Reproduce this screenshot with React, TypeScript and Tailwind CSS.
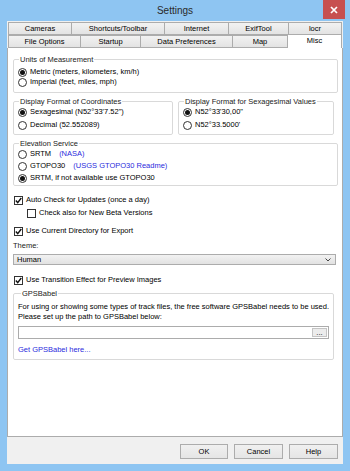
import type { ReactNode } from 'react'

const row1 = [
  { label: 'Cameras', w: 'w-[63px]' },
  { label: 'Shortcuts/Toolbar', w: 'w-[93px]' },
  { label: 'Internet', w: 'w-[64px]' },
  { label: 'ExifTool', w: 'w-[60px]' },
  { label: 'locr', w: 'w-[54px]' },
]

const row2 = [
  { label: 'File Options', w: 'w-[72px]' },
  { label: 'Startup', w: 'w-[60px]' },
  { label: 'Data Preferences', w: 'w-[92px]' },
  { label: 'Map', w: 'w-[55px]' },
]

function Radio({ checked, children }: { checked?: boolean; children: ReactNode }) {
  return (
    <div className="flex items-center h-[10px] pl-[2px]">
      <span className="w-[9px] h-[9px] rounded-full border border-[#333] bg-white flex items-center justify-center shrink-0">
        {checked && <span className="w-[5px] h-[5px] rounded-full bg-[#111]" />}
      </span>
      <span className="ml-[3px] whitespace-nowrap">{children}</span>
    </div>
  )
}

function Check({ checked, children }: { checked?: boolean; children: ReactNode }) {
  return (
    <div className="flex items-center h-[10px]">
      <span className="w-[9px] h-[9px] border border-[#333] bg-white flex items-center justify-center shrink-0">
        {checked && (
          <svg width="7" height="7" viewBox="0 0 7 7">
            <path d="M0.8 3.6 L2.7 5.6 L6.3 1" fill="none" stroke="#111" strokeWidth="1.4" />
          </svg>
        )}
      </span>
      <span className="ml-[3px] whitespace-nowrap">{children}</span>
    </div>
  )
}

function Group({ title, className, children }: { title: string; className?: string; children: ReactNode }) {
  return (
    <fieldset className={`border border-[#d9d9d9] rounded-[2px] px-[2px] ${className ?? ''}`}>
      <legend className="ml-[3px] px-[1px] leading-[9px] text-[#222]">{title}</legend>
      {children}
    </fieldset>
  )
}

function Tab({ label, w }: { label: string; w: string }) {
  return (
    <div
      className={`${w} h-[13px] border border-r-0 border-[#acacac] bg-gradient-to-b from-[#f2f2f2] to-[#e3e3e3] flex items-center justify-center leading-none last:border-r`}
    >
      {label}
    </div>
  )
}

export default function App() {
  return (
    <div
      className="w-[350px] h-[471px] bg-[#8ec5f2] flex flex-col text-[7.5px] text-black overflow-hidden"
      style={{ fontFamily: '"Liberation Sans", Arial, sans-serif' }}
    >
      {/* Title bar */}
      <div className="h-[21px] flex items-start shrink-0">
        <div className="w-[27px]" />
        <div className="flex-1 text-center text-[10px] leading-[21px] text-[#2a2a2a]">Settings</div>
        <div className="w-[22px] h-[19px] bg-[#c75050] flex items-center justify-center">
          <svg width="8" height="8" viewBox="0 0 8 8">
            <path d="M1 1 L7 7 M7 1 L1 7" stroke="white" strokeWidth="1.7" />
          </svg>
        </div>
        <div className="w-[5px]" />
      </div>

      {/* Client area */}
      <div className="mx-[7px] flex-1 bg-[#f0f0f0] flex flex-col">
        {/* Tabs */}
        <div className="pt-[1px] px-[1px]">
          <div className="flex">
            {row1.map((t) => (
              <Tab key={t.label} label={t.label} w={t.w} />
            ))}
          </div>
          <div className="flex">
            {row2.map((t) => (
              <Tab key={t.label} label={t.label} w={t.w} />
            ))}
            <div className="w-[55px] h-[14px] -mt-[1px] border border-b-0 border-[#acacac] bg-white flex justify-center pt-[2px] leading-none">
              Misc
            </div>
          </div>
        </div>

        {/* Panel */}
        <div className="h-[389px] bg-white border border-t-0 border-[#acacac] pl-[5px] pr-[4px] pt-[7px] flex flex-col">
          <Group title="Units of Measurement" className="pt-[3px] pb-[5px] flex flex-col">
            <Radio checked>Metric (meters, kilometers, km/h)</Radio>
            <Radio>Imperial (feet, miles, mph)</Radio>
          </Group>

          <div className="flex gap-[5px] mt-[4px] pr-[4px]">
            <Group title="Display Format of Coordinates" className="w-[160px] pt-[1px] pb-[4px] flex flex-col gap-[3px]">
              <Radio checked>Sexagesimal (N52°33'7.52")</Radio>
              <Radio>Decimal (52.552089)</Radio>
            </Group>
            <Group title="Display Format for Sexagesimal Values" className="flex-1 pt-[1px] pb-[4px] flex flex-col gap-[3px]">
              <Radio checked>N52°33'30,00"</Radio>
              <Radio>N52°33.5000'</Radio>
            </Group>
          </div>

          <Group title="Elevation Service" className="mt-[4px] pt-[1px] pb-[2px] flex flex-col gap-[2px]">
            <Radio>
              SRTM<span className="ml-[8px] text-[#2b2bdd]">(NASA)</span>
            </Radio>
            <Radio>
              GTOPO30<span className="ml-[8px] text-[#2b2bdd]">(USGS GTOPO30 Readme)</span>
            </Radio>
            <Radio checked>SRTM, if not available use GTOPO30</Radio>
          </Group>

          <div className="mt-[9px] pl-[1px]">
            <Check checked>Auto Check for Updates (once a day)</Check>
          </div>
          <div className="mt-[3px] pl-[14px]">
            <Check>Check also for New Beta Versions</Check>
          </div>
          <div className="mt-[8px] pl-[1px]">
            <Check checked>Use Current Directory for Export</Check>
          </div>

          <div className="mt-[5px] leading-[9px] text-[#222]">Theme:</div>
          <div className="mt-[4px] mr-[2px] h-[11px] border border-[#acacac] bg-gradient-to-b from-[#f2f2f2] to-[#e2e2e2] flex items-center justify-between pl-[3px] pr-[4px]">
            <span className="leading-none">Human</span>
            <svg width="6" height="4" viewBox="0 0 6 4">
              <path d="M0.5 0.5 L3 3 L5.5 0.5" fill="none" stroke="#444" strokeWidth="1" />
            </svg>
          </div>

          <div className="mt-[10px] pl-[1px]">
            <Check checked>Use Transition Effect for Preview Images</Check>
          </div>

          <Group title="GPSBabel" className="mt-[4px] mr-[4px] px-[4px] pt-[4px] pb-[4px] flex flex-col">
            <div className="leading-[10px]">
              For using or showing some types of track files, the free software GPSBabel needs to be used.
              <br />
              Please set up the path to GPSBabel below:
            </div>
            <div className="mt-[4px] h-[13px] border border-[#acacac] bg-white flex justify-end items-stretch p-[1px]">
              <div className="w-[15px] border border-[#c4c4c4] bg-[#ececec] flex items-center justify-center leading-none">
                ...
              </div>
            </div>
            <div className="mt-[6px] h-[10px] leading-[10px] text-[#2b2bdd]">Get GPSBabel here...</div>
          </Group>
        </div>

        {/* Buttons */}
        <div className="flex-1 flex justify-end items-start pt-[7px] pr-[5px] gap-[6px]">
          {['OK', 'Cancel', 'Help'].map((b) => (
            <div
              key={b}
              className={`${b === 'OK' ? 'w-[48px]' : 'w-[49px]'} h-[15px] border border-[#acacac] bg-gradient-to-b from-[#f0f0f0] to-[#e5e5e5] flex items-center justify-center leading-none`}
            >
              {b}
            </div>
          ))}
        </div>
      </div>
      <div className="h-[7px] shrink-0" />
    </div>
  )
}
